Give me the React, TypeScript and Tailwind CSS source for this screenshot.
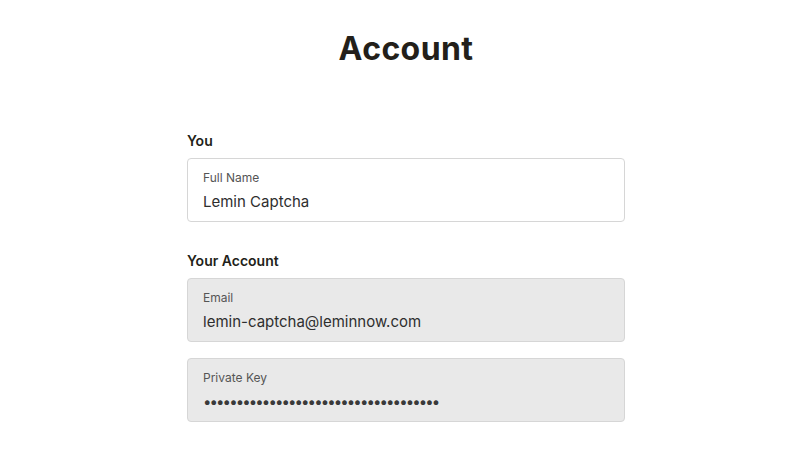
export default function App() {
  const dots = '•'.repeat(36);
  return (
    <div
      className="min-h-screen bg-white pl-3 flex flex-col items-center"
      style={{ fontFamily: 'Inter, Lato, sans-serif' }}
    >
      {/* Header */}
      <h1 className="mt-[29px] text-[32px] leading-[40px] font-bold text-[#231f1a] tracking-[0.4px]">
        Account
      </h1>

      <div className="w-[438px] mt-[62px]">
        {/* You */}
        <h2 className="text-[14px] leading-[20px] font-semibold text-[#231f1a]">You</h2>
        <div className="mt-[7px] h-[64px] rounded-[4px] border border-[#d6d6d6] bg-white px-[15px] pt-[10px]">
          <div className="text-[12px] leading-[18px] text-[#555]">Full Name</div>
          <div className="mt-[4px] text-[15px] leading-[22px] text-[#2e2e2e]">Lemin Captcha</div>
        </div>

        {/* Your Account */}
        <h2 className="mt-[29px] text-[14px] leading-[20px] font-semibold text-[#231f1a]">Your Account</h2>
        <div className="mt-[7px] h-[64px] rounded-[4px] border border-[#d6d6d6] bg-[#e9e9e9] px-[15px] pt-[10px]">
          <div className="text-[12px] leading-[18px] text-[#555]">Email</div>
          <div className="mt-[4px] text-[15px] leading-[22px] text-[#2e2e2e]">lemin-captcha@leminnow.com</div>
        </div>
        <div className="mt-4 h-[64px] rounded-[4px] border border-[#d6d6d6] bg-[#e9e9e9] px-[15px] pt-[10px]">
          <div className="text-[12px] leading-[18px] text-[#555]">Private Key</div>
          <div className="mt-[4px] text-[15px] leading-[22px] text-[#3a3a3a] tracking-[-1.9px]">{dots}</div>
        </div>
      </div>
    </div>
  );
}
